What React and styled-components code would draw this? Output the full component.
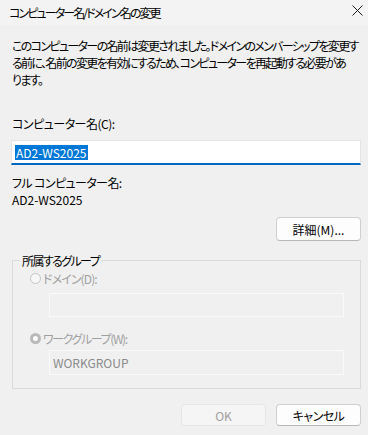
import React from "react";
import styled, { createGlobalStyle, css } from "styled-components";

const GlobalStyle = createGlobalStyle`
  html, body {
    margin: 0;
    padding: 0;
    background: #f0f0f0;
  }
  * {
    box-sizing: border-box;
  }
`;

const font = css`
  font-family: "Noto Sans CJK JP", "Noto Sans", sans-serif;
  font-size: 12px;
  line-height: 17px;
  font-feature-settings: "palt";
  color: #000;
`;

const Window = styled.div`
  ${font};
  width: 368px;
  height: 435px;
  background: #f0f0f0;
  display: flex;
  flex-direction: column;
  overflow: hidden;
`;

const TitleBar = styled.div`
  height: 25px;
  background: #f3f3f3;
  display: flex;
  align-items: center;
  justify-content: space-between;
  padding: 0 4px 0 9px;
`;

// kana in the original font are narrower, so each text gets its own squeeze
const Jp = styled.span`
  letter-spacing: ${(p) => p.$ls || 0}px;
`;

const Title = styled.div`
  margin-top: -1px;
  letter-spacing: -1.9px;
`;

const CloseButton = styled.div`
  width: 14px;
  height: 14px;
  display: flex;
  align-items: center;
  justify-content: center;
  margin-top: -4px;
`;

const Content = styled.div`
  display: flex;
  flex-direction: column;
  padding: 0 7px 0 11px;
`;

const Description = styled.p`
  margin: 12px 0 0 1px;
  white-space: nowrap;
  letter-spacing: -1.65px;
`;

const Label = styled.div`
  margin: ${(p) => p.top || 0}px 0 0 1px;
  color: ${(p) => (p.disabled ? "#a0a0a0" : "#000")};
`;

const NameInput = styled.div`
  margin-top: 8px;
  height: 25px;
  background: #fff;
  border: 1px solid #e4e4e4;
  border-bottom: 2px solid #0067c0;
  display: flex;
  align-items: center;
  padding-left: 3px;
`;

const Selected = styled.span`
  background: #0078d7;
  color: #fff;
  padding: 0 1px;
  line-height: 15px;
`;

const Button = styled.div`
  width: 85px;
  height: ${(p) => p.h || 23}px;
  display: flex;
  align-items: center;
  justify-content: center;
  border-radius: 4px;
  border: 1px solid ${(p) => (p.disabled ? "#e6e6e6" : "#cfcfcf")};
  border-bottom-color: ${(p) => (p.disabled ? "#e6e6e6" : "#b8b8b8")};
  background: ${(p) => (p.disabled ? "#f5f5f5" : "#fdfdfd")};
  color: ${(p) => (p.disabled ? "#a0a0a0" : "#000")};
`;

const DetailRow = styled.div`
  display: flex;
  justify-content: flex-end;
  margin-top: 9px;
`;

const Group = styled.fieldset`
  margin: 11px 0 0 1px;
  padding: 0 17px 13px 17px;
  border: 1px solid #dadada;
  min-inline-size: 0;
  display: flex;
  flex-direction: column;
`;

const Legend = styled.legend`
  padding: 0 2px;
  margin-left: -10px;
  color: #000;
  letter-spacing: -1.6px;
`;

const RadioRow = styled.div`
  display: flex;
  align-items: center;
  gap: 2px;
  margin-top: ${(p) => p.top}px;
  color: #a0a0a0;
`;

const Radio = styled.span`
  flex-shrink: 0;
  width: 11px;
  height: 11px;
  border-radius: 50%;
  ${(p) =>
    p.checked
      ? css`
          border: 3.5px solid #b9b9b9;
          background: #fff;
        `
      : css`
          border: 1px solid #c4c4c4;
          background: #f7f7f7;
        `}
`;

const GroupInput = styled.div`
  margin: ${(p) => p.top}px 0 0 19px;
  height: ${(p) => p.h}px;
  width: 295px;
  border: 1px solid #fafafa;
  background: #f0f0f0;
  display: flex;
  align-items: center;
  padding-left: 3px;
  color: #8a8a8a;
`;

const Footer = styled.div`
  display: flex;
  justify-content: flex-end;
  gap: 10px;
  margin-top: 15px;
`;

function CloseIcon() {
  return (
    <svg width="11" height="11" viewBox="0 0 11 11">
      <path d="M0.5 0.5 L10.5 10.5 M10.5 0.5 L0.5 10.5" stroke="#1b1b1b" strokeWidth="1" fill="none" />
    </svg>
  );
}

export default function App() {
  return (
    <>
      <GlobalStyle />
      <Window>
        <TitleBar>
          <Title>コンピューター名/ドメイン名の変更</Title>
          <CloseButton>
            <CloseIcon />
          </CloseButton>
        </TitleBar>
        <Content>
          <Description>
            このコンピューターの名前は変更されました。ドメインのメンバーシップを変更す
            <br />
            る前に、名前の変更を有効にするため、コンピューターを再起動する必要があ
            <br />
            ります。
          </Description>
          <Label top={27}>
            <Jp $ls={-0.5}>コンピューター名(C):</Jp>
          </Label>
          <NameInput>
            <Selected>AD2-WS2025</Selected>
          </NameInput>
          <Label top={9}>
            <Jp $ls={-0.6}>フル コンピューター名:</Jp>
          </Label>
          <Label>AD2-WS2025</Label>
          <DetailRow>
            <Button h={24}>詳細(M)...</Button>
          </DetailRow>
          <Group>
            <Legend>所属するグループ</Legend>
            <RadioRow top={1}>
              <Radio />
              <Jp $ls={-0.9}>ドメイン(D):</Jp>
            </RadioRow>
            <GroupInput top={6} h={24} />
            <RadioRow top={13}>
              <Radio checked />
              <Jp $ls={-1.4}>ワークグループ(W):</Jp>
            </RadioRow>
            <GroupInput top={3} h={25}>
              WORKGROUP
            </GroupInput>
          </Group>
          <Footer>
            <Button disabled h={22}>
              OK
            </Button>
            <Button h={22}>
              <Jp $ls={-0.5}>キャンセル</Jp>
            </Button>
          </Footer>
        </Content>
      </Window>
    </>
  );
}
